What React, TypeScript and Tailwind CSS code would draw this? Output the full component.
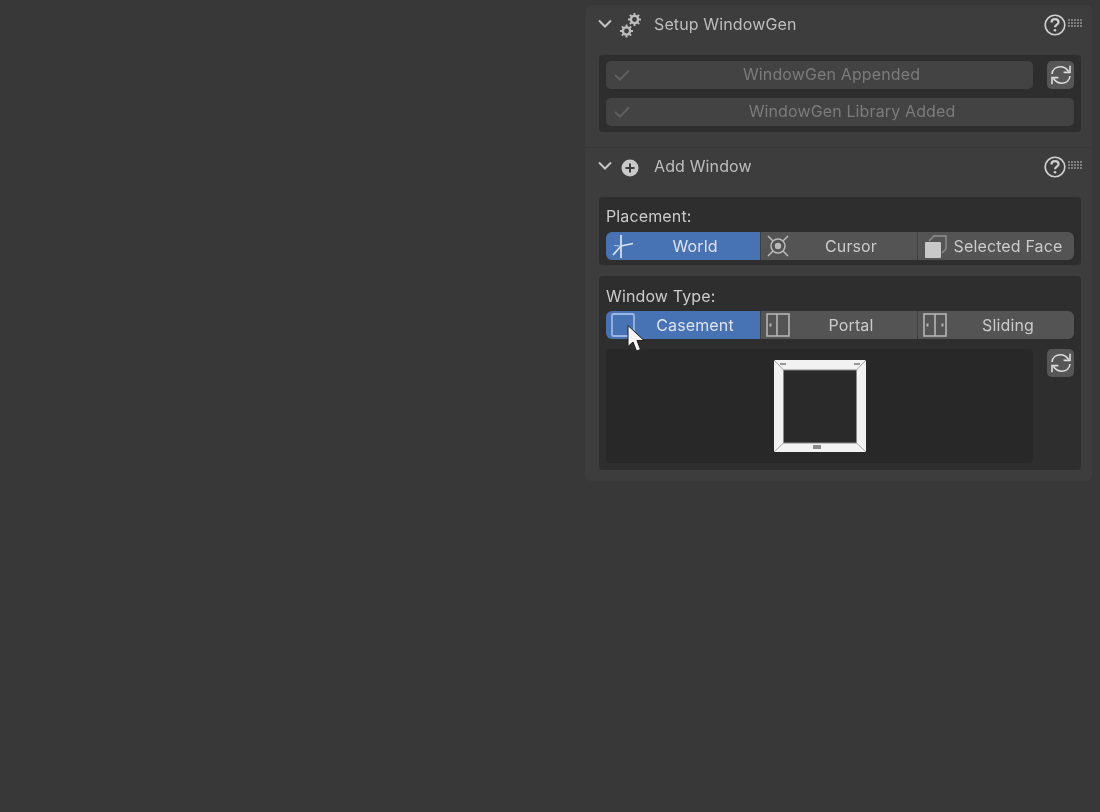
import { ReactNode } from "react";

const font = { fontFamily: "Inter, sans-serif" };

function Chevron() {
  return (
    <svg width="14" height="10" viewBox="0 0 14 10" fill="none" stroke="#c4c4c4" strokeWidth="2" className="ml-[13px] shrink-0 -mt-[2px]">
      <path d="M1 1.5 L7 7.5 L13 1.5" />
    </svg>
  );
}

function Gears() {
  const teeth = (cx: number, cy: number, r: number) =>
    [0, 45, 90, 135].map((a) => {
      const x = Math.cos((a * Math.PI) / 180) * r;
      const y = Math.sin((a * Math.PI) / 180) * r;
      return <path key={a} d={`M${cx - x} ${cy - y} L${cx + x} ${cy + y}`} strokeWidth="2" />;
    });
  return (
    <svg width="21" height="25" viewBox="0 0 21 25" fill="none" stroke="#bdbdbd">
      {teeth(14.5, 6.5, 6.5)}
      <circle cx="14.5" cy="6.5" r="3.6" strokeWidth="2.4" fill="#3d3d3d" />
      {teeth(6.5, 18, 6.5)}
      <circle cx="6.5" cy="18" r="3.6" strokeWidth="2.4" fill="#3d3d3d" />
    </svg>
  );
}

function PlusCircle() {
  return (
    <svg width="18" height="18" viewBox="0 0 18 18" className="mt-[2px]">
      <circle cx="9" cy="9" r="8.5" fill="#c9c9c9" />
      <path d="M9 4.5 V13.5 M4.5 9 H13.5" stroke="#3d3d3d" strokeWidth="2" />
    </svg>
  );
}

function Help() {
  return (
    <svg width="22" height="22" viewBox="0 0 22 22" fill="none" stroke="#d0d0d0" className="shrink-0">
      <circle cx="11" cy="11" r="9.8" strokeWidth="1.6" />
      <path d="M7.5 8.5 C7.5 6 9.2 5.2 11 5.2 C13 5.2 14.5 6.4 14.5 8.2 C14.5 10.6 11 10.6 11 13.2" strokeWidth="2.2" />
      <circle cx="11" cy="16.2" r="1.3" fill="#d0d0d0" stroke="none" />
    </svg>
  );
}

function Grip() {
  return (
    <div className="mb-[5px] ml-[2px] grid grid-cols-[repeat(5,2px)] gap-x-[1px] gap-y-[1px]">
      {Array.from({ length: 15 }).map((_, i) => (
        <span key={i} className="h-[2px] w-[2px] bg-[#7f7f7f]" />
      ))}
    </div>
  );
}

function Check() {
  return (
    <svg width="16" height="12" viewBox="0 0 16 12" fill="none" stroke="#5f5f5f" strokeWidth="2" className="absolute left-[8px] top-[8px]">
      <path d="M1 6 L6 10.5 L15 1.5" />
    </svg>
  );
}

function Refresh() {
  return (
    <button className="flex h-[28px] w-[27px] shrink-0 items-center justify-center rounded-[5px] bg-[#565656]">
      <svg width="22" height="22" viewBox="0 0 22 22" fill="none" stroke="#dcdcdc" strokeWidth="1.6">
        <path d="M2 10 C2.5 5.5 6 2.8 10.5 2.8 C14 2.8 16.5 4.5 18.5 7.5" />
        <path d="M20 1.8 V8.4 H13.6" />
        <path d="M20 12 C19.5 16.5 16 19.2 11.5 19.2 C8 19.2 5.5 17.5 3.5 14.5" />
        <path d="M2 20.2 V13.6 H8.4" />
      </svg>
    </button>
  );
}

function PanelHeader({ icon, title, height }: { icon: ReactNode; title: string; height: string }) {
  return (
    <div className={`flex items-center ${height}`}>
      <Chevron />
      <div className="flex w-[33px] shrink-0 items-center justify-center pl-[3px]">{icon}</div>
      <span className="ml-[9px] flex-1 pb-[2px] text-[16px] tracking-[0.13px] text-[#bdbdbd]">{title}</span>
      <Help />
      <Grip />
      <div className="w-[10px] shrink-0" />
    </div>
  );
}

function DisabledRow({ label, className }: { label: string; className: string }) {
  return (
    <div className={`relative flex h-[28px] items-center justify-center rounded-[5px] bg-[#434343] pb-[2px] pl-[24px] text-[16px] tracking-[0.13px] text-[#7b7b7b] ${className}`}>
      <Check />
      {label}
    </div>
  );
}

type Seg = { label: string; icon: ReactNode; active?: boolean };

function Segments({ items }: { items: Seg[] }) {
  return (
    <div className="flex h-[28px] overflow-hidden rounded-[6px]">
      {items.map((s, i) => (
        <div
          key={s.label}
          className={`relative flex items-center justify-center pb-[1px] pl-[24px] text-[16px] tracking-[0.13px] ${
            s.active ? "bg-[#4772b3] text-[#dfe4ec]" : "bg-[#545454] text-[#cbcbcb]"
          } ${i === 0 ? "w-[154px]" : "flex-1 border-l border-[#3f3f3f]"}`}
        >
          <span className="absolute left-[5px] top-[1px]">{s.icon}</span>
          {s.label}
        </div>
      ))}
    </div>
  );
}

function WorldIcon() {
  return (
    <svg width="24" height="26" viewBox="0 0 24 26" fill="none" stroke="#dbe5f4" strokeWidth="1.7">
      <path d="M10 2 V25 M10 13 L22 10.5 M10 13 L2 22" />
      <path d="M3 12.5 L10 13" strokeWidth="1" stroke="#a9c3ea" />
    </svg>
  );
}

function CursorIcon() {
  return (
    <svg width="24" height="26" viewBox="0 0 24 26" fill="none" stroke="#b9b9b9">
      <circle cx="12" cy="13" r="7" strokeWidth="1.5" />
      <circle cx="12" cy="13" r="3.2" fill="#b9b9b9" stroke="none" />
      <path d="M2 3 L7 8 M22 3 L17 8 M2 23 L7 18 M22 23 L17 18" strokeWidth="1.5" />
    </svg>
  );
}

function FaceIcon() {
  return (
    <svg width="24" height="26" viewBox="0 0 24 26" fill="none" stroke="#8f8f8f" strokeWidth="1.4">
      <path d="M6 8 L11 3 H23 V16 L19 20" />
      <rect x="2" y="9" width="16" height="16" rx="1" fill="#c8c8c8" stroke="none" />
    </svg>
  );
}

function CasementIcon() {
  return (
    <svg width="24" height="26" viewBox="0 0 24 26" fill="none" stroke="#98b6e4" strokeWidth="1.8">
      <rect x="1" y="2" width="22" height="22" rx="1.5" />
    </svg>
  );
}

function PortalIcon() {
  return (
    <svg width="24" height="26" viewBox="0 0 24 26" fill="none" stroke="#b4b4b4" strokeWidth="1.6">
      <rect x="1" y="2" width="22" height="22" />
      <path d="M11 2 V24" />
      <path d="M4.5 11.5 V14.5" strokeWidth="2" />
    </svg>
  );
}

function SlidingIcon() {
  return (
    <svg width="24" height="26" viewBox="0 0 24 26" fill="none" stroke="#b4b4b4" strokeWidth="1.6">
      <rect x="1" y="2" width="22" height="22" />
      <path d="M12 2 V24" />
      <path d="M4.5 11.5 V14.5 M19.5 11.5 V14.5" strokeWidth="2" />
    </svg>
  );
}

function WindowPreview() {
  return (
    <svg width="92" height="92" viewBox="0 0 92 92">
      <rect x="0" y="0" width="92" height="92" rx="1.5" fill="#f2f2f2" />
      <rect x="9.5" y="10" width="73" height="73" fill="#2a2a2a" stroke="#8a8a8a" strokeWidth="1" />
      <path d="M1 1 L9.5 10 M91 1 L82.5 10 M1 91 L9.5 83 M91 91 L82.5 83" stroke="#a8a8a8" strokeWidth="1" />
      <rect x="6" y="3" width="6" height="2" fill="#999" />
      <rect x="80" y="3" width="6" height="2" fill="#999" />
      <rect x="39" y="85" width="8" height="4" fill="#8a8a8a" />
    </svg>
  );
}

function Pointer() {
  return (
    <svg width="18" height="28" viewBox="0 0 18 28" className="absolute left-[28px] top-[49px]">
      <path d="M1 0.5 V21.5 L6 17 L9.5 26 L13.5 24.5 L10 15.5 H17 Z" fill="#f4f4f4" stroke="#1f1f1f" strokeWidth="1" />
    </svg>
  );
}

export default function App() {
  return (
    <div className="flex h-[812px] w-[1100px] items-start justify-end bg-[#383838] pr-[8px]" style={font}>
      <div className="mt-[5px] h-[476px] w-[507px] rounded-[6px] bg-[#3d3d3d] blur-[0.5px]">
        {/* Setup WindowGen */}
        <PanelHeader icon={<Gears />} title="Setup WindowGen" height="h-[40px]" />
        <div className="ml-[14px] mr-[11px] mt-[10px] flex h-[77px] flex-col gap-[9px] rounded-[4px] bg-[#2e2e2e] p-[6px_7px]">
          <div className="flex gap-[14px]">
            <DisabledRow label="WindowGen Appended" className="flex-1" />
            <Refresh />
          </div>
          <DisabledRow label="WindowGen Library Added" className="" />
        </div>

        <div className="mt-[15px] border-t border-[#383838]" />

        {/* Add Window */}
        <PanelHeader icon={<PlusCircle />} title="Add Window" height="h-[38px]" />
        <div className="ml-[14px] mr-[11px] mt-[11px] flex h-[68px] flex-col rounded-[4px] bg-[#2e2e2e] px-[7px]">
          <div className="flex h-[35px] items-end pb-[6px] text-[16px] leading-[20px] tracking-[0.13px] text-[#cbcbcb]">Placement:</div>
          <Segments
            items={[
              { label: "World", icon: <WorldIcon />, active: true },
              { label: "Cursor", icon: <CursorIcon /> },
              { label: "Selected Face", icon: <FaceIcon /> },
            ]}
          />
        </div>

        <div className="relative ml-[14px] mr-[11px] mt-[11px] flex h-[194px] flex-col rounded-[4px] bg-[#2e2e2e] px-[7px]">
          <div className="flex h-[35px] items-end pb-[5px] text-[16px] leading-[20px] tracking-[0.13px] text-[#cbcbcb]">Window Type:</div>
          <Segments
            items={[
              { label: "Casement", icon: <CasementIcon />, active: true },
              { label: "Portal", icon: <PortalIcon /> },
              { label: "Sliding", icon: <SlidingIcon /> },
            ]}
          />
          <div className="mt-[10px] flex gap-[14px]">
            <div className="flex h-[114px] flex-1 items-center justify-center rounded-[4px] bg-[#282828]">
              <WindowPreview />
            </div>
            <Refresh />
          </div>
          <Pointer />
        </div>
      </div>
    </div>
  );
}
